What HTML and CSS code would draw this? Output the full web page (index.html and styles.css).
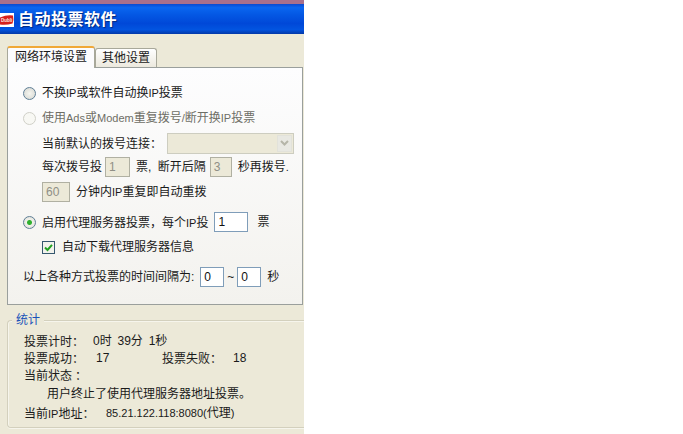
FILE: index.html
```html
<!DOCTYPE html>
<html lang="zh-CN">
<head>
<meta charset="utf-8">
<title>自动投票软件</title>
<link rel="stylesheet" href="styles.css">
</head>
<body>
<div class="window">
  <div class="strip"></div>
  <div class="titlebar">
    <svg class="logo" width="14" height="14" viewBox="0 0 14 14"><rect width="14" height="14" fill="#fff"/><path d="M0 4.5Q7 1.5 13 2.5Q14 7 12.5 10.5Q6 12.5 0 11.5Z" fill="#d8201c"/><text x="1" y="8.5" font-size="4.5" font-weight="700" fill="#ffe8e0" font-family="Liberation Sans, sans-serif">Dubli</text></svg>
    <span class="title">自动投票软件</span>
  </div>
  <div class="tabs">
    <div class="tab active">网络环境设置</div>
    <div class="tab">其他设置</div>
  </div>
  <div class="panel">
    <div class="row r1"><span class="radio"></span><span>不换<span class="lat">IP</span>或软件自动换<span class="lat">IP</span>投票</span></div>
    <div class="row r2 dim"><span class="radio off"></span><span>使用<span class="lat">Ads</span>或<span class="lat">Modem</span>重复拨号<span class="lat">/</span>断开换<span class="lat">IP</span>投票</span></div>
    <div class="row r3 indent"><span class="lbl">当前默认的拨号连接<span class="cc">：</span></span>
      <span class="combo"><span class="combo-btn"><svg width="9" height="6" viewBox="0 0 9 6"><path d="M1 1l3.5 3.5L8 1" fill="none" stroke="#b5b5a8" stroke-width="2"/></svg></span></span>
    </div>
    <div class="row r4 indent"><span>每次拨号投</span><span class="box w25">1</span><span class="g1">票, 断开后隔</span><span class="box w22">3</span><span class="g2">秒再拨号<span class="lat">.</span></span></div>
    <div class="row r5 indent"><span class="box w28">60</span><span class="g3">分钟内<span class="lat">IP</span>重复即自动重拨</span></div>
    <div class="row r6"><span class="radio on"></span><span>启用代理服务器投票<span class="cc">，</span>每个<span class="lat">IP</span>投</span><span class="box live w34">1</span><span class="g4">票</span></div>
    <div class="row r7 indent2"><span class="check"><svg width="9" height="9" viewBox="0 0 9 9"><path d="M1 4.5l2.5 2.5L8 1.8" fill="none" stroke="#21a121" stroke-width="2"/></svg></span><span>自动下载代理服务器信息</span></div>
    <div class="row r8"><span>以上各种方式投票的时间间隔为:</span><span class="box live w24 g5">0</span><span class="tilde">~</span><span class="box live w24">0</span><span class="g6">秒</span></div>
  </div>
  <div class="group">
    <div class="legend">统计</div>
    <div class="st s1"><span class="k">投票计时<span class="cc">：</span></span><span class="spaced">0时 39分 1秒</span></div>
    <div class="st"><span class="k">投票成功<span class="cc">：</span></span><span class="v1">17</span><span class="k2">投票失败<span class="cc">：</span></span><span>18</span></div>
    <div class="st">当前状态<span class="cc">：</span></div>
    <div class="st msg">用户终止了使用代理服务器地址投票。</div>
    <div class="st s5"><span class="k3">当前<span class="lat">IP</span>地址<span class="cc">：</span></span><span><span class="lat">85.21.122.118:8080(</span>代理<span class="lat">)</span></span></div>
  </div>
</div>
</body>
</html>
```
FILE: styles.css
```css
html, body { margin: 0; padding: 0; background: #fff; }
body { font: 12px/16px "Liberation Sans", "Noto Sans CJK SC", sans-serif; color: #1a1a1a; }
.lat { font-size: 11px; }
.cc { font-family: "Noto Sans CJK TC", sans-serif; }
.window { width: 304px; height: 434px; background: #ece9d8; overflow: hidden; }
.strip { height: 4px; background: #a8708c; }
.titlebar {
  box-sizing: border-box; height: 30px; padding-top: 2px; display: flex; align-items: center; gap: 4px;
  background: linear-gradient(#0a4ad0 0, #0a66f0 12%, #0458e4 35%, #0048d8 65%, #0254e0 85%, #0338a8 100%);
}
.logo { flex: none; }
.title { color: #fff; font-size: 16px; letter-spacing: .5px; font-weight: 700; text-shadow: 1px 1px 1px #002a80; }
.tabs { display: flex; align-items: flex-end; height: 33px; padding-left: 7px; }
.tab {
  height: 18px; line-height: 19px; width: 60px; text-align: center;
  border: 1px solid #a8a89a; border-bottom: 0; border-radius: 3px 3px 0 0;
  background: linear-gradient(#fff, #ece9de);
}
.tab.active {
  width: 86px; height: 20px; line-height: 18px; background: #fcfcfe;
  border-top: 2px solid #f0a838; position: relative; top: 1px;
}
.panel {
  box-sizing: border-box; width: 296px; height: 238px; margin-left: 7px;
  border: 1px solid #9a9f9c; padding-top: 15px;
  background: linear-gradient(#fdfdfe, #f3f2ee);
}
.row { display: flex; align-items: center; height: 20px; padding-left: 15px; white-space: nowrap; }
.r2, .r3, .r5, .r7 { margin-top: 5px; }
.r4 { margin-top: 4px; }
.r6, .r8 { margin-top: 10px; }
.indent, .indent2 { padding-left: 34px; }
.dim { color: #6e6e66; }
.radio {
  box-sizing: border-box; width: 13px; height: 13px; border-radius: 50%;
  border: 1px solid #5f7f96; background: radial-gradient(#f6f6f0, #d4d5d0); margin-right: 6px; flex: none;
}
.radio.off { border-color: #d0d0c8; background: #f8f8f4; }
.radio.on { background: radial-gradient(#2fb02f 0 2px, #f0f0ea 3px, #dcdcd6 100%); }
.lbl { width: 125px; }
.combo {
  box-sizing: border-box; width: 127px; height: 21px; background: #ece9d8; border: 1px solid #cdcdc0;
  display: flex; justify-content: flex-end; align-items: center; padding-right: 1px;
}
.combo-btn {
  width: 15px; height: 17px; background: #e8e8e2; border: 1px solid #e2e2da; box-sizing: border-box;
  display: flex; align-items: center; justify-content: center;
}
.box {
  box-sizing: border-box; height: 20px; line-height: 18px; padding-left: 3px;
  border: 1px solid #b0b0a2; background: #ece9d8; color: #8f8f86; flex: none;
}
.box.live { background: #fff; border-color: #7f9db9; color: #111; }
.w25 { width: 25px; margin-left: 3px; }
.w22 { width: 22px; }
.w28 { width: 28px; }
.w34 { width: 34px; }
.w24 { width: 24px; }
.g1 { margin: 0 4px 0 6px; word-spacing: 3px; }
.g2 { margin-left: 6px; }
.g3 { margin-left: 6px; }
.g4 { margin-left: 9px; }
.g5 { margin-left: 6px; }
.g6 { margin-left: 6px; }
.r6 .box { margin-left: 6px; }
.tilde { width: 13px; text-align: center; }
.check {
  box-sizing: border-box; width: 13px; height: 13px; border: 1px solid #36586f; background: #f2f2ec;
  display: flex; align-items: center; justify-content: center; margin-right: 7px;
}
.group {
  box-sizing: border-box; position: relative; width: 297px; height: 108px; margin: 15px 0 0 7px;
  border: 1px solid #d3d0bd; border-right: 0; border-radius: 4px 0 0 4px; padding: 11px 0 0 16px;
  box-shadow: 0 1px 0 #f6f5ec, inset 0 1px 0 #f6f5ec, inset 1px 0 0 #f6f5ec;
}
.legend { position: absolute; left: 4px; top: -9px; background: #ece9d8; color: #1a52b8; padding: 0 4px; }
.st { display: flex; height: 18px; line-height: 18px; white-space: nowrap; }
.s1 { height: 17px; }
.s5 { margin-top: 1px; }
.spaced { word-spacing: 2.5px; }
.k { width: 69px; }
.v1 { width: 69px; padding-left: 3px; box-sizing: border-box; }
.k2 { width: 71px; }
.k3 { width: 82px; }
.msg { padding-left: 23px; }
```
